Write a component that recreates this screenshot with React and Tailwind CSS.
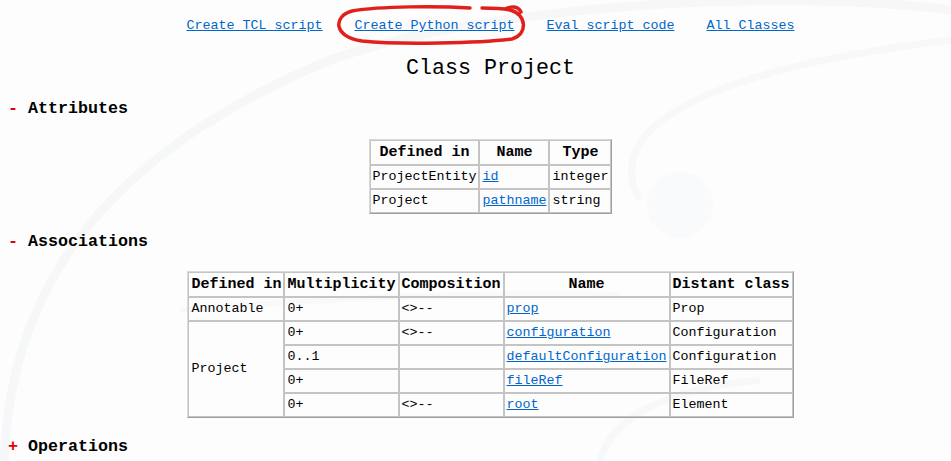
import React from "react";

const mono = { fontFamily: '"Liberation Mono", "DejaVu Sans Mono", monospace' };

const links = ["Create TCL script", "Create Python script", "Eval script code", "All Classes"];

const Heading = ({ sign, children, className = "" }) => (
  <div className={`pl-[8px] text-[16.67px] leading-[22px] font-bold text-black ${className}`}>
    <span className="text-[#e00000]">{sign}</span> {children}
  </div>
);

const Th = ({ children }) => (
  <th className="border border-[#c4c4c4] px-[2px] py-[1px] text-[15px] leading-[21px] font-bold text-center whitespace-nowrap">
    {children}
  </th>
);

const Td = ({ children, link, rowSpan }) => (
  <td
    rowSpan={rowSpan}
    className="border border-[#c4c4c4] px-[2px] py-[1px] text-[13.33px] leading-[20px] text-left align-middle whitespace-nowrap"
  >
    {link ? <a className="text-[#0066cc] underline">{children}</a> : children}
  </td>
);

function Backdrop() {
  return (
    <svg className="absolute inset-0 pointer-events-none" width="951" height="461" viewBox="0 0 951 461">
      <path d="M 4 461 C 10 300, 90 160, 330 60 C 500 0, 800 -10, 951 10" fill="none" stroke="#f6f7f9" strokeWidth="9" />
      <path d="M 640 200 C 600 130, 700 70, 951 40" fill="none" stroke="#f7f8fa" strokeWidth="7" />
      <circle cx="680" cy="205" r="33" fill="#f9fafb" />
      <path d="M 600 461 C 610 420, 660 390, 760 380" fill="none" stroke="#f7f8fa" strokeWidth="7" />
      <path d="M 180 310 C 300 300, 500 290, 620 295" fill="none" stroke="#f8f9fb" strokeWidth="6" />
    </svg>
  );
}

function Scribble() {
  return (
    <svg className="absolute left-0 top-0 pointer-events-none" width="951" height="60" viewBox="0 0 951 60">
      <path
        d="M 470 8 C 440 6, 380 6, 352 11 C 333 16, 333 37, 362 41 C 400 45, 480 43, 512 39 C 528 35, 527 14, 510 10 C 500 8, 492 8, 482 8 M 505 9 C 512 6, 518 6, 521 12"
        fill="none"
        stroke="#e0201c"
        strokeWidth="3.5"
        strokeLinecap="round"
      />
    </svg>
  );
}

export default function App() {
  return (
    <div className="relative w-[951px] h-[461px] overflow-hidden bg-[#fdfdfd] text-black" style={mono}>
      <Backdrop />
      <div className="relative">
        <div className="pl-[30px] pt-[16px] flex justify-center gap-[32px] text-[13.33px] leading-[20px]">
          {links.map((l) => (
            <a key={l} className="text-[#0066cc] underline whitespace-nowrap">
              {l}
            </a>
          ))}
        </div>
        <div className="pl-[30px] mt-[18px] text-center text-[21.67px] leading-[30px]">Class Project</div>

        <Heading sign="-" className="mt-[14px]">Attributes</Heading>
        <div className="pl-[30px] mt-[19px] flex justify-center">
          <table className="border-separate border-spacing-0 border border-t-[#d8d8d8] border-l-[#d8d8d8] border-b-[#a0a0a0] border-r-[#a0a0a0]">
            <thead>
              <tr>
                <Th>Defined in</Th>
                <Th>Name</Th>
                <Th>Type</Th>
              </tr>
            </thead>
            <tbody>
              <tr>
                <Td>ProjectEntity</Td>
                <Td link>id</Td>
                <Td>integer</Td>
              </tr>
              <tr>
                <Td>Project</Td>
                <Td link>pathname</Td>
                <Td>string</Td>
              </tr>
            </tbody>
          </table>
        </div>

        <Heading sign="-" className="mt-[17px]">Associations</Heading>
        <div className="pl-[30px] mt-[18px] flex justify-center">
          <table className="border-separate border-spacing-0 border border-t-[#d8d8d8] border-l-[#d8d8d8] border-b-[#a0a0a0] border-r-[#a0a0a0]">
            <thead>
              <tr>
                <Th>Defined in</Th>
                <Th>Multiplicity</Th>
                <Th>Composition</Th>
                <Th>Name</Th>
                <Th>Distant class</Th>
              </tr>
            </thead>
            <tbody>
              <tr>
                <Td>Annotable</Td>
                <Td>0+</Td>
                <Td>&lt;&gt;--</Td>
                <Td link>prop</Td>
                <Td>Prop</Td>
              </tr>
              <tr>
                <Td rowSpan={5}>Project</Td>
                <Td>0+</Td>
                <Td>&lt;&gt;--</Td>
                <Td link>configuration</Td>
                <Td>Configuration</Td>
              </tr>
              <tr>
                <Td>0..1</Td>
                <Td></Td>
                <Td link>defaultConfiguration</Td>
                <Td>Configuration</Td>
              </tr>
              <tr>
                <Td>0+</Td>
                <Td></Td>
                <Td link>fileRef</Td>
                <Td>FileRef</Td>
              </tr>
              <tr>
                <Td>0+</Td>
                <Td>&lt;&gt;--</Td>
                <Td link>root</Td>
                <Td>Element</Td>
              </tr>
            </tbody>
          </table>
        </div>

        <Heading sign="+" className="mt-[18px]">Operations</Heading>
      </div>
      <Scribble />
    </div>
  );
}
